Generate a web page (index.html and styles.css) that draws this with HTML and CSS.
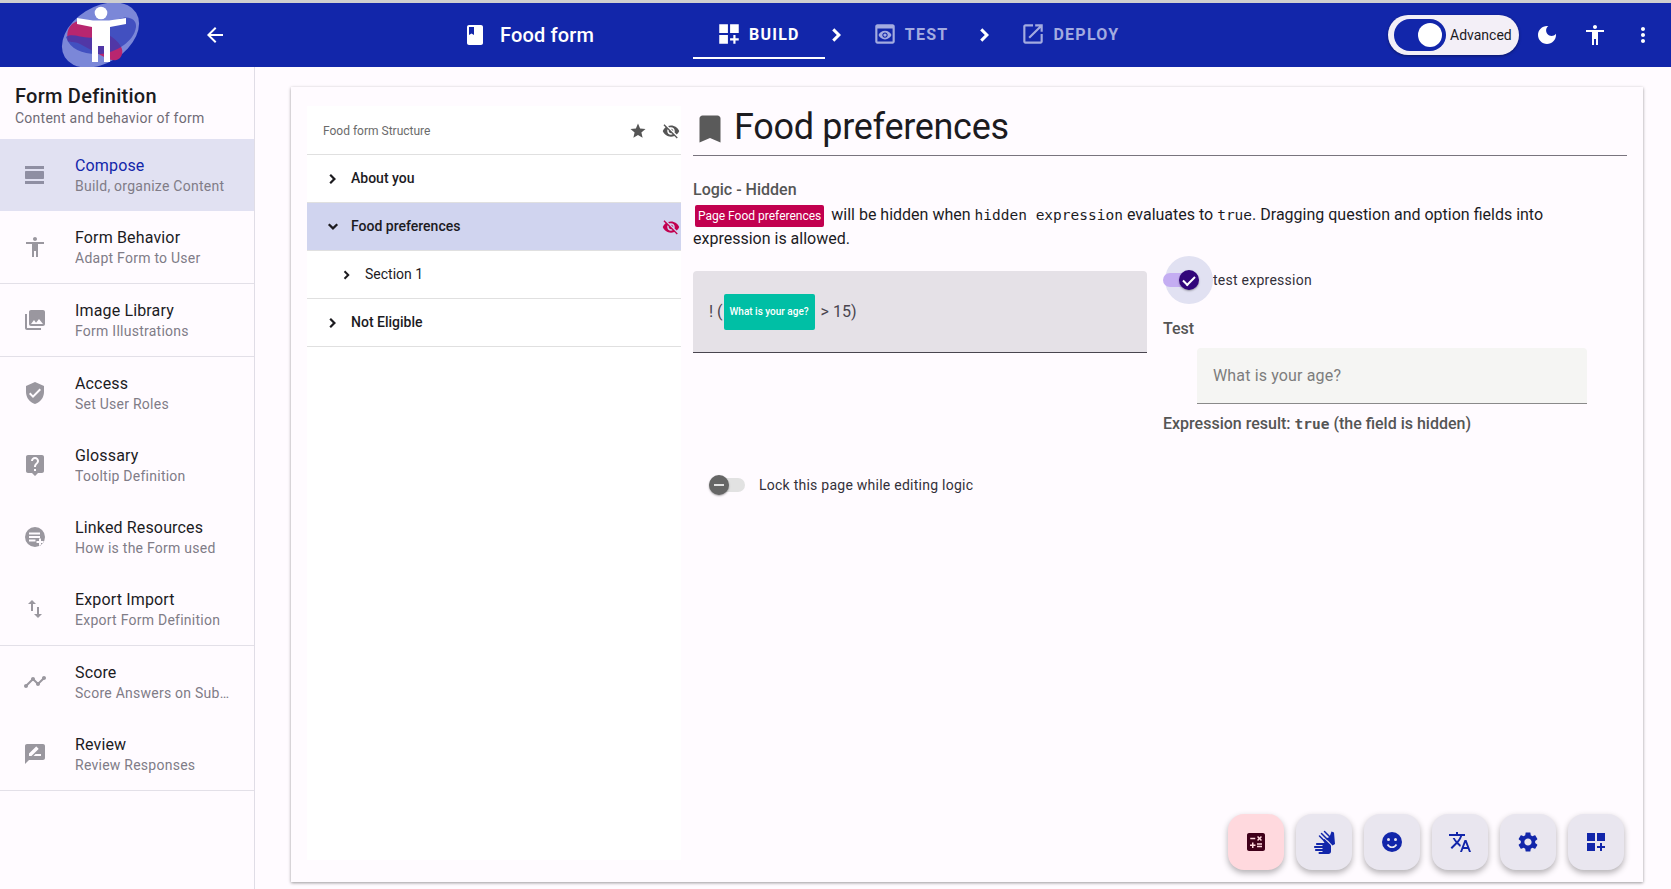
FILE: index.html
```html
<!DOCTYPE html>
<html lang="en">
<head>
    <meta charset="UTF-8">
    <meta name="viewport" content="width=device-width, initial-scale=1.0">
    <title>Food form</title>
    <link rel="stylesheet" href="styles.css">
</head>
<body>
    <!-- icon sprite -->
    <svg class="sprite" xmlns="http://www.w3.org/2000/svg">
        <symbol id="i-compose" viewBox="0 0 24 24"><path d="M2 21h19v-3H2v3zM20 8H3c-.55 0-1 .45-1 1v6c0 .55.45 1 1 1h17c.55 0 1-.45 1-1V9c0-.55-.45-1-1-1zM2 3v3h19V3H2z"/></symbol>
        <symbol id="i-person" viewBox="0 0 24 24"><path d="M12 2c1.1 0 2 .9 2 2s-.9 2-2 2-2-.9-2-2 .9-2 2-2zm9 7h-6v13h-2v-6h-2v6H9V9H3V7h18v2z"/></symbol>
        <symbol id="i-photos" viewBox="0 0 24 24"><path d="M22 16V4c0-1.1-.9-2-2-2H8c-1.1 0-2 .9-2 2v12c0 1.1.9 2 2 2h12c1.1 0 2-.9 2-2zm-11-4l2.03 2.71L16 11l4 5H8l3-4zM2 6v14c0 1.1.9 2 2 2h14v-2H4V6H2z"/></symbol>
        <symbol id="i-shield" viewBox="0 0 24 24"><path d="M12 1L3 5v6c0 5.55 3.84 10.74 9 12 5.16-1.26 9-6.45 9-12V5l-9-4zm-2 16l-4-4 1.41-1.41L10 14.17l6.59-6.59L18 9l-8 8z"/></symbol>
        <symbol id="i-help" viewBox="0 0 24 24"><path d="M19 2H5c-1.11 0-2 .9-2 2v14c0 1.1.89 2 2 2h4l3 3 3-3h4c1.1 0 2-.9 2-2V4c0-1.1-.9-2-2-2zm-6 16h-2v-2h2v2zm2.07-7.75l-.9.92C13.45 11.9 13 12.5 13 14h-2v-.5c0-1.1.45-2.1 1.17-2.83l1.24-1.26c.37-.36.59-.86.59-1.41 0-1.1-.9-2-2-2s-2 .9-2 2H8c0-2.21 1.79-4 4-4s4 1.79 4 4c0 .88-.36 1.68-.93 2.25z"/></symbol>
        <symbol id="i-linked" viewBox="0 0 24 24"><path fill-rule="evenodd" d="M12 2a10 10 0 1 0 0 20 10 10 0 0 0 0-20zM6 7.500h11v2H6zM6 11h11v2H6zM6 14.500h6.500v2H6zM16 13.500h2v2.500h2.500v2H18v2.500h-2V18h-2.500v-2H16z"/></symbol>
        <symbol id="i-swap" viewBox="0 0 24 24"><path d="M16 17.01V10h-2v7.01h-3L15 21l4-3.99h-3zM9 3L5 6.99h3V14h2V6.99h3L9 3z"/></symbol>
        <symbol id="i-timeline" viewBox="0 0 24 24"><path d="M23 8c0 1.1-.9 2-2 2-.18 0-.35-.02-.51-.07l-3.56 3.55c.05.16.07.34.07.52 0 1.1-.9 2-2 2s-2-.9-2-2c0-.18.02-.36.07-.52l-2.55-2.55c-.16.05-.34.07-.52.07s-.36-.02-.52-.07l-4.55 4.56c.05.16.07.33.07.51 0 1.1-.9 2-2 2s-2-.9-2-2 .9-2 2-2c.18 0 .35.02.51.07l4.56-4.55C8.02 9.36 8 9.18 8 9c0-1.1.9-2 2-2s2 .9 2 2c0 .18-.02.36-.07.52l2.55 2.55c.16-.05.34-.07.52-.07s.36.02.52.07l3.55-3.56C19.02 8.35 19 8.18 19 8c0-1.1.9-2 2-2s2 .9 2 2z"/></symbol>
        <symbol id="i-review" viewBox="0 0 24 24"><path d="M20 2H4c-1.1 0-2 .9-2 2v18l4-4h14c1.1 0 2-.9 2-2V4c0-1.1-.9-2-2-2zM6 14v-2.47l6.88-6.88c.2-.2.51-.2.71 0l1.77 1.77c.2.2.2.51 0 .71L8.47 14H6zm12 0h-7.5l2-2H18v2z"/></symbol>
        <symbol id="i-book" viewBox="0 0 24 24"><path d="M18 2H6c-1.1 0-2 .9-2 2v16c0 1.1.9 2 2 2h12c1.1 0 2-.9 2-2V4c0-1.1-.9-2-2-2zM6 4h5v8l-2.5-1.5L6 12V4z"/></symbol>
        <symbol id="i-build" viewBox="0 0 24 24"><path d="M3 3h8v8H3zm10 0h8v8h-8zM3 13h8v8H3zm15 0h-2v3h-3v2h3v3h2v-3h3v-2h-3z"/></symbol>
        <symbol id="i-preview" viewBox="0 0 24 24"><path d="M19 3H5c-1.11 0-2 .9-2 2v14c0 1.1.89 2 2 2h14c1.1 0 2-.9 2-2V5c0-1.1-.89-2-2-2zm0 16H5V7h14v12zm-5.5-6c0 .83-.67 1.5-1.5 1.5s-1.5-.67-1.5-1.5.67-1.5 1.5-1.5 1.5.67 1.5 1.5zM12 9c-2.73 0-5.06 1.66-6 4 .94 2.34 3.27 4 6 4s5.06-1.66 6-4c-.94-2.34-3.27-4-6-4zm0 6.5c-1.38 0-2.5-1.12-2.5-2.5s1.12-2.5 2.5-2.5 2.5 1.12 2.5 2.5-1.12 2.5-2.5 2.5z"/></symbol>
        <symbol id="i-open" viewBox="0 0 24 24"><path d="M19 19H5V5h7V3H5c-1.11 0-2 .9-2 2v14c0 1.1.89 2 2 2h14c1.1 0 2-.9 2-2v-7h-2v7zM14 3v2h3.59l-9.83 9.83 1.41 1.41L19 6.41V10h2V3h-7z"/></symbol>
        <symbol id="i-next" viewBox="0 0 24 24"><path d="M9.3 5.3L7.2 7.4 11.8 12l-4.6 4.6 2.1 2.1 6.7-6.7z"/></symbol>
        <symbol id="i-down" viewBox="0 0 24 24"><path d="M18.7 9.3l-2.1-2.1L12 11.8 7.400 7.200 5.300 9.300l6.700 6.700z"/></symbol>
        <symbol id="i-back" viewBox="0 0 24 24"><path d="M20 11H7.83l5.59-5.59L12 4l-8 8 8 8 1.41-1.41L7.83 13H20v-2z"/></symbol>
        <symbol id="i-moon" viewBox="0 0 24 24"><path d="M12 3c-4.97 0-9 4.030-9 9s4.030 9 9 9 9-4.030 9-9c0-.46-.04-.92-.1-1.360-.98 1.370-2.580 2.260-4.400 2.260-2.980 0-5.400-2.420-5.400-5.400 0-1.810.89-3.420 2.260-4.400-.44-.06-.9-.1-1.360-.1z"/></symbol>
        <symbol id="i-dots" viewBox="0 0 24 24"><path d="M12 8c1.100 0 2-.9 2-2s-.9-2-2-2-2 .9-2 2 .9 2 2 2zm0 2c-1.100 0-2 .9-2 2s.9 2 2 2 2-.9 2-2-.9-2-2-2zm0 6c-1.100 0-2 .9-2 2s.9 2 2 2 2-.9 2-2-.9-2-2-2z"/></symbol>
        <symbol id="i-star" viewBox="0 0 24 24"><path d="M12 17.270L18.180 21l-1.640-7.030L22 9.240l-7.190-.61L12 2 9.190 8.630 2 9.240l5.460 4.730L5.820 21z"/></symbol>
        <symbol id="i-hidden" viewBox="0 0 24 24"><path d="M12 7c2.760 0 5 2.240 5 5 0 .65-.13 1.260-.36 1.830l2.920 2.920c1.510-1.260 2.700-2.890 3.430-4.750-1.730-4.390-6-7.500-11-7.500-1.400 0-2.740.25-3.980.7l2.160 2.160C10.740 7.130 11.350 7 12 7zM2 4.270l2.280 2.280.46.46C3.080 8.300 1.780 10.020 1 12c1.730 4.390 6 7.500 11 7.500 1.550 0 3.030-.3 4.380-.84l.42.42L19.730 22 21 20.730 3.270 3 2 4.270zM7.530 9.800l1.550 1.550c-.05.21-.08.43-.08.65 0 1.660 1.340 3 3 3 .22 0 .44-.03.65-.08l1.550 1.550c-.67.33-1.410.53-2.200.53-2.760 0-5-2.240-5-5 0-.79.2-1.530.53-2.200zm4.310-.78l3.150 3.150.02-.16c0-1.660-1.340-3-3-3l-.17.01z"/></symbol>
        <symbol id="i-bookmark" viewBox="0 0 24 24"><path d="M17 3H7c-1.100 0-1.990.9-1.990 2L5 21l7-3 7 3V5c0-1.100-.9-2-2-2z"/></symbol>
        <symbol id="i-calc" viewBox="0 0 24 24"><path d="M19 3H5c-1.100 0-2 .9-2 2v14c0 1.100.9 2 2 2h14c1.100 0 2-.9 2-2V5c0-1.100-.9-2-2-2zm-5.970 4.060L14.090 6l1.410 1.410L16.910 6l1.060 1.060-1.410 1.410 1.410 1.410-1.060 1.060-1.410-1.400-1.410 1.410-1.060-1.060 1.410-1.410-1.410-1.420zm-6.780.66h5v1.500h-5v-1.500zM11.500 16h-2v2H8v-2H6v-1.500h2v-2h1.500v2h2V16zm6.500 1.250h-5v-1.500h5v1.500zm0-2.500h-5v-1.500h5v1.500z"/></symbol>
        <symbol id="i-sign" viewBox="0 0 24 24">
            <path d="M12.490 13l-.93-1.860c-.37-.74-.07-1.640.67-2.010l.26-.13 5.730 5.460c.5.47.78 1.130.78 1.810v5.230c0 1.380-1.120 2.500-2.500 2.500h-9c-.55 0-1-.45-1-1s.45-1 1-1h3v-1H4c-.55 0-1-.45-1-1s.45-1 1-1h6.500v-1H3c-.55 0-1-.45-1-1s.45-1 1-1h7.500v-1H5c-.55 0-1-.45-1-1s.45-1 1-1h7.490z"/>
            <path d="M14 8.500L17.500 7 19.500 1.500 22 2.500 23 14 20.500 15.500z"/>
            <path d="M7.500 6l5 5M9.500 3.500l6 6M12.500 1.500l5 5" stroke="#1226aa" stroke-width="1.500" stroke-linecap="round" fill="none"/>
        </symbol>
        <symbol id="i-translate" viewBox="0 0 24 24"><path d="M12.870 15.070l-2.540-2.510.03-.03c1.740-1.940 2.980-4.170 3.710-6.530H17V4h-7V2H8v2H1v1.990h11.170C11.500 7.920 10.440 9.750 9 11.350 8.070 10.320 7.300 9.190 6.690 8h-2c.73 1.630 1.730 3.170 2.980 4.560l-5.090 5.020L4 19l5-5 3.110 3.110.76-2.040zM18.500 10h-2L12 22h2l1.120-3h4.750L21 22h2l-4.500-12zm-2.620 7l1.620-4.330L19.120 17h-3.240z"/></symbol>
        <symbol id="i-settings" viewBox="0 0 24 24"><path d="M19.140 12.940c.04-.3.06-.61.06-.94 0-.32-.02-.64-.07-.94l2.030-1.580c.18-.14.23-.41.12-.61l-1.920-3.320c-.12-.22-.37-.29-.59-.22l-2.390.96c-.5-.38-1.030-.7-1.620-.94l-.36-2.540c-.04-.24-.24-.41-.48-.41h-3.840c-.24 0-.43.17-.47.41l-.36 2.540c-.59.24-1.130.57-1.620.94l-2.390-.96c-.22-.08-.47 0-.59.22L2.740 8.870c-.12.21-.08.47.12.61l2.030 1.580c-.05.3-.09.63-.09.94s.02.64.07.94l-2.030 1.580c-.18.14-.23.41-.12.61l1.920 3.320c.12.22.37.29.59.22l2.390-.96c.5.38 1.030.7 1.620.94l.36 2.540c.05.24.24.41.48.41h3.840c.24 0 .44-.17.47-.41l.36-2.540c.59-.24 1.130-.56 1.620-.94l2.390.96c.22.08.47 0 .59-.22l1.920-3.320c.12-.22.07-.47-.12-.61l-2.010-1.580zM12 15.600c-1.980 0-3.600-1.620-3.600-3.600s1.620-3.600 3.600-3.600 3.600 1.620 3.600 3.600-1.620 3.600-3.600 3.600z"/></symbol>
    </svg>

    <header class="topbar">
        <svg class="logo" viewBox="40 3 120 64" xmlns="http://www.w3.org/2000/svg">
            <ellipse cx="100.500" cy="35" rx="42" ry="28" transform="rotate(-32 100.500 35)" fill="#7b87d8"/>
            <path d="M68 41C65 28 73 20 82 21L92 24L112 37C122 44 125 52 120 58C116 62 110 60 106 58L80 44C74 41 70 43 68 41Z" fill="#b8266f"/>
            <path d="M66 37C70 50 85 55 100 54C115 53 134 42 136 27C137 19 128 15 119 19C109 24 107 34 96 37C84 40 72 32 66 37Z" fill="#2f3db8" opacity="0.75"/>
            <circle cx="101" cy="13" r="6.300" fill="#fff"/>
            <path d="M77 18L93 20.500H109L126 18V24L110 27V62H104V46H98V62H92V27L77 24Z" fill="#fff"/>
        </svg>
        <button class="icon-btn back-btn"><svg class="ic"><use href="#i-back"/></svg></button>
        <div class="form-name">
            <svg class="ic"><use href="#i-book"/></svg>
            <span>Food form</span>
        </div>
        <nav class="steps">
            <a class="step active"><svg class="step-ic"><use href="#i-build"/></svg>BUILD</a>
            <svg class="ic"><use href="#i-next"/></svg>
            <a class="step"><svg class="step-ic"><use href="#i-preview"/></svg>TEST</a>
            <svg class="ic"><use href="#i-next"/></svg>
            <a class="step"><svg class="step-ic"><use href="#i-open"/></svg>DEPLOY</a>
        </nav>
        <div class="topbar-right">
            <div class="mode-pill">
                <span class="mode-track"><span class="mode-thumb"></span></span>
                <span>Advanced</span>
            </div>
            <button class="icon-btn"><svg class="ic"><use href="#i-moon"/></svg></button>
            <button class="icon-btn"><svg class="ic"><use href="#i-person"/></svg></button>
            <button class="icon-btn"><svg class="ic"><use href="#i-dots"/></svg></button>
        </div>
    </header>

    <div class="layout">
        <aside class="sidebar">
            <div class="side-head">
                <h2>Form Definition</h2>
                <p>Content and behavior of form</p>
            </div>
            <a class="side-item selected">
                <svg class="ic"><use href="#i-compose"/></svg>
                <div><b>Compose</b><span>Build, organize Content</span></div>
            </a>
            <a class="side-item divided">
                <svg class="ic"><use href="#i-person"/></svg>
                <div><b>Form Behavior</b><span>Adapt Form to User</span></div>
            </a>
            <a class="side-item divided">
                <svg class="ic"><use href="#i-photos"/></svg>
                <div><b>Image Library</b><span>Form Illustrations</span></div>
            </a>
            <a class="side-item">
                <svg class="ic"><use href="#i-shield"/></svg>
                <div><b>Access</b><span>Set User Roles</span></div>
            </a>
            <a class="side-item">
                <svg class="ic"><use href="#i-help"/></svg>
                <div><b>Glossary</b><span>Tooltip Definition</span></div>
            </a>
            <a class="side-item">
                <svg class="ic"><use href="#i-linked"/></svg>
                <div><b>Linked Resources</b><span>How is the Form used</span></div>
            </a>
            <a class="side-item divided">
                <svg class="ic"><use href="#i-swap"/></svg>
                <div><b>Export Import</b><span>Export Form Definition</span></div>
            </a>
            <a class="side-item">
                <svg class="ic"><use href="#i-timeline"/></svg>
                <div><b>Score</b><span>Score Answers on Submit</span></div>
            </a>
            <a class="side-item divided">
                <svg class="ic"><use href="#i-review"/></svg>
                <div><b>Review</b><span>Review Responses</span></div>
            </a>
        </aside>

        <main class="main">
            <section class="card">
                <div class="tree">
                    <div class="tree-head">
                        <span>Food form Structure</span>
                        <svg class="tree-ic"><use href="#i-star"/></svg>
                        <svg class="tree-ic"><use href="#i-hidden"/></svg>
                    </div>
                    <div class="tree-row page">
                        <svg class="chev"><use href="#i-next"/></svg>About you
                    </div>
                    <div class="tree-row page current">
                        <svg class="chev"><use href="#i-down"/></svg>Food preferences
                        <svg class="tree-ic red"><use href="#i-hidden"/></svg>
                    </div>
                    <div class="tree-row child">
                        <svg class="chev"><use href="#i-next"/></svg>Section 1
                    </div>
                    <div class="tree-row page">
                        <svg class="chev"><use href="#i-next"/></svg>Not Eligible
                    </div>
                </div>

                <div class="editor">
                    <h1 class="page-title">
                        <svg><use href="#i-bookmark"/></svg>Food preferences
                    </h1>
                    <h3 class="logic-title">Logic - Hidden</h3>
                    <p class="logic-text">
                        <span class="page-chip">Page Food preferences</span> will be hidden when <code>hidden expression</code> evaluates to <code>true</code>. Dragging question and option fields into expression is allowed.
                    </p>
                    <div class="logic-row">
                        <div class="expr">! (<span class="field-chip">What is your age?</span>&gt; 15)</div>
                        <div class="test-col">
                            <label class="switch-row">
                                <span class="switch on"><span class="knob"></span></span>
                                test expression
                            </label>
                            <h4>Test</h4>
                            <div class="test-input">What is your age?</div>
                            <h4 class="result">Expression result: <code>true</code> (the field is hidden)</h4>
                        </div>
                    </div>
                    <label class="lock-row">
                        <span class="switch off"><span class="knob"></span></span>
                        Lock this page while editing logic
                    </label>
                </div>

                <div class="fabs">
                    <button class="fab pink"><svg><use href="#i-calc"/></svg></button>
                    <button class="fab"><svg><use href="#i-sign"/></svg></button>
                    <button class="fab">
                        <svg viewBox="0 0 24 24">
                            <circle cx="12" cy="12" r="10"/>
                            <circle cx="8.500" cy="9.500" r="1.500" class="cut"/>
                            <circle cx="15.500" cy="9.500" r="1.500" class="cut"/>
                            <path d="M7.500 14.500c1 1.800 2.600 2.700 4.500 2.700s3.500-.9 4.500-2.700" class="smile"/>
                        </svg>
                    </button>
                    <button class="fab"><svg><use href="#i-translate"/></svg></button>
                    <button class="fab"><svg><use href="#i-settings"/></svg></button>
                    <button class="fab"><svg><use href="#i-build"/></svg></button>
                </div>
            </section>
        </main>
    </div>
</body>
</html>
```

FILE: styles.css
```css
* {
    box-sizing: border-box;
}
html, body {
    height: 100%;
}
body {
    display: flex;
    flex-direction: column;
    margin: 0;
    overflow: hidden;
    background-color: #fffbff;
    color: #1c1b1f;
    font-family: Roboto, "Noto Sans", sans-serif;
}
.sprite {
    display: none;
}
.ic {
    flex: none;
    width: 24px;
    height: 24px;
    fill: currentColor;
}
button {
    padding: 0;
    border: none;
    background: none;
    color: inherit;
    font: inherit;
}

/* top bar */
.topbar {
    display: flex;
    flex: none;
    align-items: center;
    height: 67px;
    border-top: 3px solid #cfcfcf;
    background-color: #1226aa;
    color: #fff;
}
.logo {
    flex: none;
    width: 120px;
    height: 64px;
    margin-left: 40px;
}
.icon-btn {
    display: flex;
    flex: none;
    justify-content: center;
    width: 48px;
}
.back-btn {
    width: 24px;
    margin-left: 43px;
}
.form-name {
    display: flex;
    flex: none;
    align-items: center;
    gap: 13px;
    width: 230px;
    margin-left: 236px;
    font-size: 20px;
    font-weight: 500;
    letter-spacing: 0.15px;
}
.steps {
    display: flex;
    align-items: flex-start;
    align-self: flex-start;
}
.steps > .ic {
    margin-top: 20px;
}
.step {
    display: flex;
    align-items: center;
    gap: 7px;
    height: 56px;
    padding: 8px 25px 2px 23px;
    color: #a3abe0;
    font-size: 16px;
    font-weight: 700;
    letter-spacing: 1.25px;
}
.step.active {
    border-bottom: 2px solid #fff;
    color: #fff;
    padding-bottom: 0;
}
.step-ic {
    width: 26px;
    height: 26px;
    fill: currentColor;
}
.topbar-right {
    display: flex;
    align-items: center;
    margin-left: auto;
    padding-right: 4px;
}
.mode-pill {
    display: flex;
    align-items: center;
    gap: 4px;
    width: 131px;
    height: 40px;
    margin-right: 4px;
    padding-left: 6px;
    border-radius: 20px;
    background-color: #f3eff7;
    box-shadow: 0 1px 3px rgba(0, 0, 0, 0.4);
    color: #1c1b1f;
    font-size: 14px;
}
.mode-track {
    display: flex;
    justify-content: flex-end;
    align-items: center;
    width: 52px;
    height: 32px;
    padding-right: 4px;
    border-radius: 16px;
    background-color: #1226aa;
}
.mode-thumb {
    width: 24px;
    height: 24px;
    border-radius: 50%;
    background-color: #fff;
}

/* left menu */
.layout {
    display: flex;
    flex: 1;
    min-height: 0;
}
.sidebar {
    flex: none;
    width: 255px;
    border-right: 1px solid #e0dde6;
}
.side-head {
    height: 72px;
    padding: 17px 15px 0;
}
.side-head h2 {
    margin: 0;
    font-size: 20px;
    font-weight: 500;
    line-height: 24px;
    letter-spacing: 0.25px;
}
.side-head p {
    margin: 0;
    color: #6f6b76;
    font-size: 14px;
    line-height: 20px;
    letter-spacing: 0.25px;
}
.side-item {
    display: flex;
    align-items: center;
    gap: 28px;
    height: 72px;
    padding-left: 23px;
    padding-bottom: 1px;
    color: #9a979f;
}
.side-item.divided {
    height: 73px;
    border-bottom: 1px solid #e3e0e8;
}
.side-item.selected {
    background-color: #e1e1f2;
    color: #8f8fa3;
}
.side-item div {
    min-width: 0;
    width: 160px;
    padding-top: 2px;
}
.side-item b {
    display: block;
    color: #1c1b1f;
    font-size: 16px;
    font-weight: 400;
    line-height: 21px;
    letter-spacing: 0.15px;
}
.side-item.selected b {
    color: #1226aa;
}
.side-item span {
    display: block;
    overflow: hidden;
    color: #807c87;
    font-size: 14px;
    line-height: 20px;
    letter-spacing: 0.25px;
    text-overflow: ellipsis;
    white-space: nowrap;
}

/* main card */
.main {
    flex: 1;
    min-width: 0;
    padding: 20px 28px 7px 36px;
}
.card {
    display: flex;
    position: relative;
    gap: 12px;
    height: 100%;
    padding: 19px 16px 22px;
    background-color: #fffbff;
    box-shadow: 0 1px 3px rgba(0, 0, 0, 0.4);
}
.tree {
    flex: none;
    width: 374px;
    background-color: #fff;
}
.tree-head {
    display: flex;
    align-items: center;
    height: 49px;
    padding: 2px 1px 0 16px;
    border-bottom: 1px solid #e0e0e0;
    color: #6b6b6b;
    font-size: 12px;
}
.tree-head span {
    flex: 1;
}
.tree-head .tree-ic {
    margin-left: 15px;
}
.tree-ic {
    width: 18px;
    height: 18px;
    fill: #555;
}
.tree-ic.red {
    margin-left: auto;
    margin-right: 1px;
    fill: #c2004f;
}
.tree-row {
    display: flex;
    align-items: center;
    gap: 9px;
    height: 48px;
    padding-bottom: 2px;
    border-bottom: 1px solid #e0e0e0;
    font-size: 14px;
    font-weight: 500;
    color: #1c1b1f;
}
.tree-row.page {
    padding-left: 17px;
}
.tree-row.child {
    padding-left: 32px;
    font-weight: 400;
}
.tree-row.current {
    background-color: #d0d4ef;
}
.chev {
    width: 18px;
    height: 18px;
    margin-top: 2px;
    fill: #1c1b1f;
}
.tree-row .tree-ic {
    margin-top: 2px;
}
.child .chev {
    width: 16px;
    height: 16px;
    margin-right: 1px;
}

/* logic editor */
.editor {
    flex: 1;
    min-width: 0;
}
.page-title {
    display: flex;
    align-items: center;
    gap: 6px;
    height: 50px;
    margin: 0;
    padding-bottom: 8px;
    border-bottom: 1px solid #79747e;
    font-size: 36px;
    font-weight: 400;
    letter-spacing: -0.3px;
}
.page-title svg {
    width: 36px;
    height: 36px;
    margin: 4px 0 0 -1px;
    fill: #5a5a5a;
}
.logic-title {
    margin: 22px 0 0;
    color: #555;
    font-size: 16px;
    font-weight: 500;
    line-height: 24px;
}
.logic-text {
    margin: 1px 0 0;
    padding-right: 40px;
    font-size: 16px;
    line-height: 24px;
}
code {
    font-family: "DejaVu Sans Mono", monospace;
    font-size: 14.500px;
}
.page-chip {
    display: inline-block;
    margin: 0 3px 0 2px;
    padding: 0 3px;
    border-radius: 2px;
    background-color: #c2004f;
    color: #fff;
    font-size: 12px;
    line-height: 22px;
    vertical-align: 0;
}
.logic-row {
    display: flex;
    gap: 16px;
    margin-top: 5px;
}
.expr {
    display: flex;
    align-items: center;
    flex: none;
    width: 454px;
    height: 82px;
    margin-top: 15px;
    padding-left: 16px;
    border-bottom: 1px solid #49454f;
    border-radius: 4px 4px 0 0;
    background-color: #e5e1e7;
    color: #49454f;
    font-size: 16px;
}
.field-chip {
    display: flex;
    align-items: center;
    justify-content: center;
    width: 91px;
    height: 36px;
    margin: 0 6px 0 1px;
    border-radius: 2px;
    background-color: #00bfa5;
    color: #fff;
    font-size: 10px;
    font-weight: 500;
}
.test-col {
    flex: 1;
}
.switch-row, .lock-row {
    display: flex;
    align-items: center;
    font-size: 14px;
    letter-spacing: 0.25px;
    color: #33303a;
}
.switch-row {
    gap: 18px;
    height: 48px;
}
.switch {
    display: block;
    position: relative;
    flex: none;
    width: 32px;
    height: 14px;
    border-radius: 7px;
}
.switch.on::before {
    content: "";
    position: absolute;
    top: -17px;
    left: 2px;
    width: 48px;
    height: 48px;
    border-radius: 50%;
    background-color: #e1e1f2;
}
.switch.on::after {
    content: "";
    position: absolute;
    inset: 0;
    border-radius: 7px;
    background-color: #c4adf2;
}
.switch.off {
    width: 36px;
    background-color: #e2e2e2;
}
.knob {
    display: flex;
    align-items: center;
    justify-content: center;
    position: absolute;
    z-index: 1;
    top: -3px;
    width: 20px;
    height: 20px;
    border-radius: 50%;
    box-shadow: 0 1px 2px rgba(0, 0, 0, 0.35);
}
.knob::after {
    content: "";
}
.on .knob {
    left: 16px;
    background-color: #32067a;
}
.on .knob::after {
    width: 10px;
    height: 5px;
    margin-top: -2px;
    border-left: 2px solid #fff;
    border-bottom: 2px solid #fff;
    transform: rotate(-45deg);
}
.off .knob {
    left: 0;
    background-color: #666;
}
.off .knob::after {
    width: 10px;
    height: 2px;
    background-color: #e2e2e2;
}
.test-col h4 {
    margin: 15px 0 0;
    color: #555;
    font-size: 16px;
    font-weight: 500;
    line-height: 20px;
}
.test-col h4.result {
    margin-top: 10px;
}
.result code {
    font-weight: 700;
}
.test-input {
    display: flex;
    align-items: center;
    width: 390px;
    height: 56px;
    margin: 9px 0 0 34px;
    padding-left: 16px;
    border-bottom: 1px solid #8a8a8a;
    border-radius: 4px 4px 0 0;
    background-color: #f5f5f3;
    color: #7d7d7d;
    font-size: 16px;
    letter-spacing: 0.15px;
}
.lock-row {
    gap: 14px;
    margin-top: 43px;
    padding-left: 16px;
}

/* bottom right buttons */
.fabs {
    display: flex;
    position: absolute;
    right: 19px;
    bottom: 12px;
    gap: 12px;
}
.fab {
    display: flex;
    align-items: center;
    justify-content: center;
    width: 56px;
    height: 56px;
    border-radius: 16px;
    background-color: #e9e6ef;
    box-shadow: 0 3px 6px rgba(0, 0, 0, 0.3);
}
.fab svg {
    width: 24px;
    height: 24px;
    fill: #1226aa;
}
.fab .cut {
    fill: #e9e6ef;
}
.fab .smile {
    fill: none;
    stroke: #e9e6ef;
    stroke-width: 1.600;
}
.fab.pink {
    background-color: #ffd9de;
}
.fab.pink svg {
    fill: #40001a;
}
```
